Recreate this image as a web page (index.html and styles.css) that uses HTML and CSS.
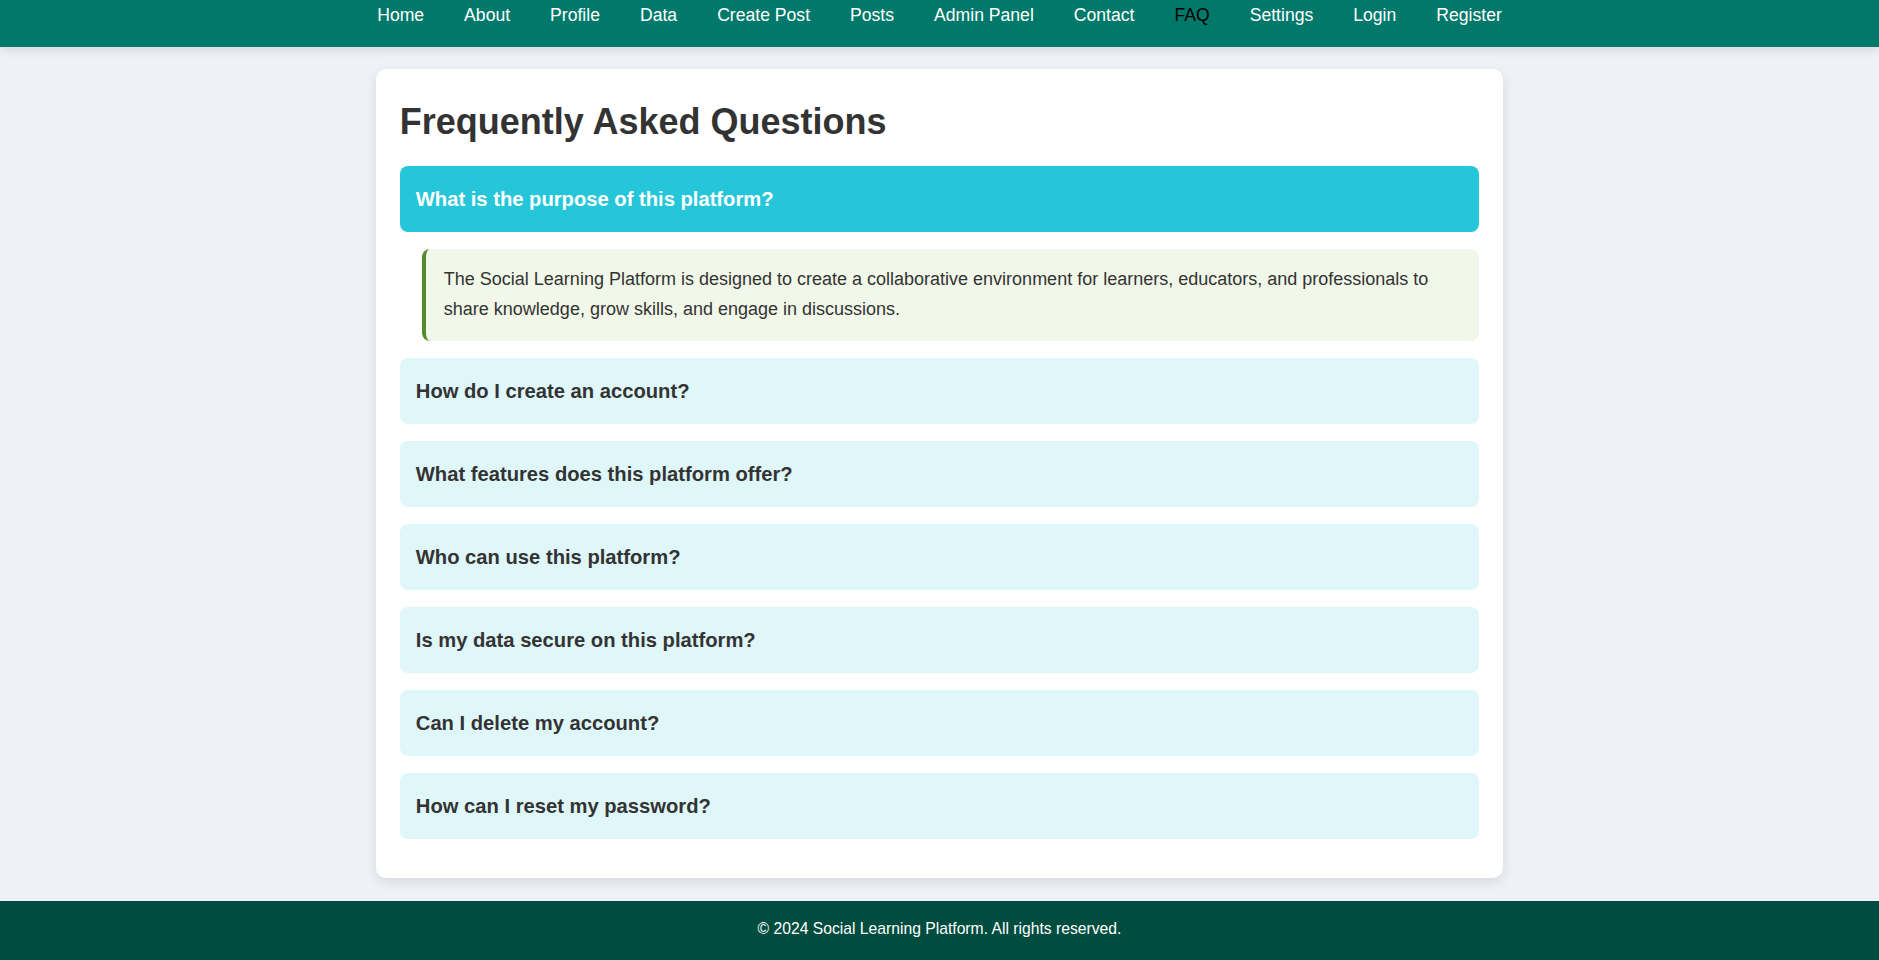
FILE: index.html
```html
<!DOCTYPE html>
<html lang="en">
<head>
<meta charset="UTF-8">
<title>FAQ - Social Learning Platform</title>
<link rel="stylesheet" href="styles.css">
</head>
<body>
<header class="site-header">
  <nav class="main-nav">
    <ul class="nav-list">
      <li><a href="#">Home</a></li>
      <li><a href="#">About</a></li>
      <li><a href="#">Profile</a></li>
      <li><a href="#">Data</a></li>
      <li><a href="#">Create Post</a></li>
      <li><a href="#">Posts</a></li>
      <li><a href="#">Admin Panel</a></li>
      <li><a href="#">Contact</a></li>
      <li><a href="#" class="active">FAQ</a></li>
      <li><a href="#">Settings</a></li>
      <li><a href="#">Login</a></li>
      <li><a href="#">Register</a></li>
    </ul>
  </nav>
</header>

<main class="faq-card">
  <h1 class="faq-title">Frequently Asked Questions</h1>
  <div class="faq-list">
    <div class="faq-question open">What is the purpose of this platform?</div>
    <div class="faq-answer">The Social Learning Platform is designed to create a collaborative environment for learners, educators, and professionals to share knowledge, grow skills, and engage in discussions.</div>
    <div class="faq-question">How do I create an account?</div>
    <div class="faq-question">What features does this platform offer?</div>
    <div class="faq-question">Who can use this platform?</div>
    <div class="faq-question">Is my data secure on this platform?</div>
    <div class="faq-question">Can I delete my account?</div>
    <div class="faq-question">How can I reset my password?</div>
  </div>
</main>

<footer class="site-footer">
  <p>&copy; 2024 Social Learning Platform. All rights reserved.</p>
</footer>
</body>
</html>
```

FILE: styles.css
```css
* {
  box-sizing: border-box;
}

html, body {
  margin: 0;
  padding: 0;
}

body {
  font-family: "Liberation Sans", Arial, sans-serif;
  background: #eef1f6;
  color: #333;
  line-height: 1.6;
}

.site-header {
  background: #00796b;
  height: 47px;
  box-shadow: 0 2px 10px rgba(0, 0, 0, 0.12);
  position: relative;
  z-index: 1;
}

.nav-list {
  list-style: none;
  margin: 0;
  padding: 1px 0 0;
  display: flex;
  justify-content: center;
  gap: 40px;
}

.nav-list a {
  color: #fff;
  text-decoration: none;
  font-size: 17.6px;
}

.nav-list a.active {
  color: #000;
}

.faq-card {
  display: block;
  width: 60%;
  margin: 22px auto 23px;
  background: #fff;
  border-radius: 10px;
  padding: 24px 24px 39px;
  box-shadow: 0 4px 12px rgba(0, 0, 0, 0.1);
}

.faq-title {
  margin: 2px 0 17px;
  font-size: 36px;
  line-height: 1.5;
  font-weight: bold;
  color: #333;
}

.faq-list {
  display: flex;
  flex-direction: column;
  gap: 17px;
}

.faq-question {
  background: #e0f7fa;
  border-radius: 8px;
  padding: 17px 16px;
  font-size: 20.2px;
  font-weight: bold;
  line-height: 32px;
  color: #333;
}

.faq-question.open {
  background: #26c6da;
  color: #fff;
}

.faq-answer {
  margin-left: 22px;
  background: #f1f8e9;
  border-left: 4px solid #558b2f;
  border-radius: 8px;
  padding: 15px 18px 17px;
  font-size: 18px;
  line-height: 30px;
  color: #333;
}

.site-footer {
  background: #004d40;
  color: #fff;
  text-align: center;
  padding: 15px 0 20px;
}

.site-footer p {
  margin: 0;
  font-size: 15.7px;
}
```
